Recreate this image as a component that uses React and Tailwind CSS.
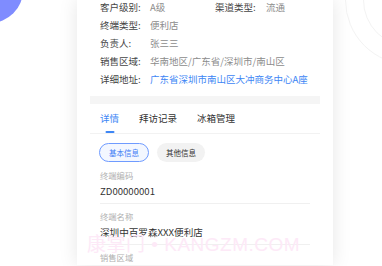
import React from "react";

const font = { fontFamily: '"Noto Sans CJK SC", "Noto Sans", sans-serif' };

function InfoRow({ label, value, valueClass = "text-[#8c8c8c]", label2, value2 }) {
  return (
    <div className="flex h-[18px] items-center whitespace-nowrap text-[9.5px] leading-none">
      <div className="flex w-[115px] shrink-0 items-center">
        <span className="w-[50px] shrink-0 text-[#444]">{label}</span>
        <span className={`whitespace-nowrap ${valueClass}`}>{value}</span>
      </div>
      {label2 && (
        <div className="flex items-center">
          <span className="w-[51px] shrink-0 text-[#444]">{label2}</span>
          <span className="text-[#8c8c8c]">{value2}</span>
        </div>
      )}
    </div>
  );
}

function Field({ label, value, divider = true }) {
  return (
    <div className={`pt-[6px] pb-[5px] ${divider ? "border-b border-[#f0f0f0]" : ""}`}>
      <div className="h-[12px] whitespace-nowrap text-[8.3px] leading-[12px] text-[#b0b0b0]">{label}</div>
      <div className="mt-[3px] h-[14px] whitespace-nowrap text-[9.6px] leading-[14px] text-[#333]">{value}</div>
    </div>
  );
}

export default function App() {
  return (
    <div className="relative h-[266px] w-[382px] overflow-hidden bg-white" style={font}>
      <div className="absolute left-[-43px] top-[-43px] h-[66px] w-[66px] rounded-full bg-[#7f8cff]" />
      <div className="absolute left-[345px] top-[-65px] h-[130px] w-[130px] rounded-full border border-[#f3f3f3]" />
      <div className="absolute left-[363px] top-[-47px] h-[94px] w-[94px] rounded-full border border-[#f3f3f3]" />

      <div className="relative ml-[77px] h-full w-[256px] bg-white px-[13px] shadow-[0_0_18px_rgba(0,0,0,0.10)]">
        <div className="-mt-[1px] pl-[10px]">
          <InfoRow label="客户级别:" value="A级" label2="渠道类型:" value2="流通" />
          <InfoRow label="终端类型:" value="便利店" />
          <InfoRow label="负责人:" value="张三三" />
          <InfoRow label="销售区域:" value="华南地区/广东省/深圳市/南山区" />
          <InfoRow label="详细地址:" value="广东省深圳市南山区大冲商务中心A座" valueClass="text-[#3d86f5]" />
        </div>

        <div className="mt-[7px] h-[8px] bg-[#f5f5f5]" />

        <div className="flex h-[30px] items-center gap-[20px] border-b border-[#f2f2f2] pl-[10px] text-[9.5px]">
          <div className="relative flex h-full items-center text-[#3d86f5]">
            详情
            <div className="absolute bottom-[0px] left-1/2 h-[2px] w-[9px] -translate-x-1/2 rounded bg-[#3d86f5]" />
          </div>
          <div className="text-[#333]">拜访记录</div>
          <div className="text-[#333]">冰箱管理</div>
        </div>

        <div className="mt-[9px] flex gap-[8px] pl-[9px]">
          <div className="flex h-[19px] w-[50px] items-center justify-center rounded-full border border-[#6f9bff] bg-[#f3f7ff] text-[7.5px] text-[#3d7cf5]">
            基本信息
          </div>
          <div className="flex h-[19px] w-[48px] items-center justify-center rounded-full bg-[#f2f2f2] text-[7.5px] text-[#333]">
            其他信息
          </div>
        </div>

        <div className="mt-[1px] mr-[10px] pl-[10px]">
          <Field label="终端编码" value="ZD00000001" />
          <Field label="终端名称" value="深圳中百罗森XXX便利店" />
          <Field label="销售区域" value="华南地区/广东省/深圳市/南山区" divider={false} />
        </div>

        <div className="pointer-events-none absolute left-[10px] top-[235px] flex items-center whitespace-nowrap text-[19px] leading-[22px] tracking-[0.5px] text-[#fde9f7]" style={{ fontFamily: '"Liberation Sans", "Noto Sans CJK SC", sans-serif' }}>
          康掌门 • KANGZM.COM
        </div>
      </div>
    </div>
  );
}
